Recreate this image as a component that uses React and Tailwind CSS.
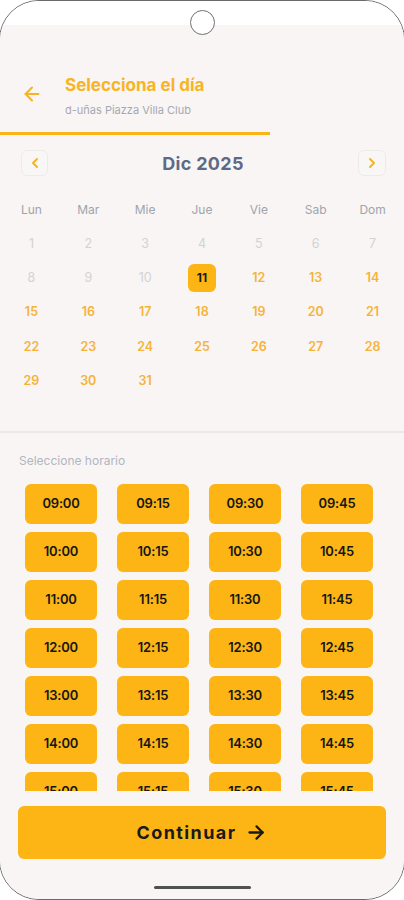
import React from "react";

const times = [];
for (let h = 9; h <= 19; h++) {
  for (const m of ["00", "15", "30", "45"]) {
    times.push(`${String(h).padStart(2, "0")}:${m}`);
  }
}

const weekdays = ["Lun", "Mar", "Mie", "Jue", "Vie", "Sab", "Dom"];
const days = Array.from({ length: 31 }, (_, i) => i + 1);

export default function App() {
  return (
    <div className="relative w-[404px] h-[900px] bg-white overflow-hidden" style={{ fontFamily: "Inter, 'Noto Sans', sans-serif" }}>
      <div className="-mx-[1px] h-full rounded-[40px] border-[1.5px] border-[#6a6a6a] overflow-hidden flex flex-col">
        <div className="h-[24px] bg-white shrink-0" />
        <div className="flex-1 min-h-0 bg-[#f8f5f4] flex flex-col">
          {/* Header */}
          <div className="flex items-center pl-[21px] pt-[48px]">
            <svg width="22" height="22" viewBox="0 0 24 24" fill="none" stroke="#f7b322" strokeWidth="2.2" strokeLinecap="round" strokeLinejoin="round" className="-mt-[3px]">
              <path d="M19 12H5" />
              <path d="M12 19l-7-7 7-7" />
            </svg>
            <div className="ml-[22px] flex flex-col">
              <div className="text-[17px] leading-[24px] font-bold text-[#f8b423]">Selecciona el día</div>
              <div className="mt-[5px] text-[11px] leading-[16px] text-[#a6a9b3]">d-uñas Piazza Villa Club</div>
            </div>
          </div>
          <div className="mt-[14px] h-[3px] w-[270px] bg-[#fbb418]" />

          {/* Month nav */}
          <div className="mt-[14px] flex items-center justify-between pl-[21px] pr-[18px]">
            <button className="w-[27px] h-[26px] rounded-[6px] border border-[#eeeae8] bg-[#f9f7f6] flex items-center justify-center">
              <svg width="10" height="12" viewBox="0 0 10 12" fill="none" stroke="#f7b322" strokeWidth="2" strokeLinecap="round" strokeLinejoin="round">
                <path d="M7 2L3 6l4 4" />
              </svg>
            </button>
            <div className="text-[18px] font-bold text-[#5e6a85] tracking-[0.3px] mt-[1px]">Dic 2025</div>
            <button className="w-[28px] h-[26px] rounded-[6px] border border-[#eeeae8] bg-[#f9f7f6] flex items-center justify-center">
              <svg width="10" height="12" viewBox="0 0 10 12" fill="none" stroke="#f7b322" strokeWidth="2" strokeLinecap="round" strokeLinejoin="round">
                <path d="M3 2l4 4-4 4" />
              </svg>
            </button>
          </div>

          {/* Calendar */}
          <div className="px-[3px] mt-[25px] grid grid-cols-7">
            {weekdays.map((w) => (
              <div key={w} className="text-center text-[12px] leading-[16px] text-[#a0a4ad]">{w}</div>
            ))}
          </div>
          <div className="px-[3px] mt-[12px] grid grid-cols-7 gap-y-[6.4px] pb-[35px]">
            {days.map((d) => {
              const disabled = d < 11;
              const selected = d === 11;
              return (
                <div key={d} className="h-[28px] flex items-center justify-center">
                  {selected ? (
                    <div className="w-[28px] h-[28px] rounded-[6px] bg-[#fdb515] flex items-center justify-center text-[12px] font-bold text-[#1a1a1a]">{d}</div>
                  ) : (
                    <span className={disabled ? "text-[12.5px] text-[#d4d2d1]" : "text-[12.5px] font-semibold text-[#f6b338]"}>{d}</span>
                  )}
                </div>
              );
            })}
          </div>
          <div className="h-[2px] bg-[#ece8e7]" />

          {/* Times */}
          <div className="pt-[20px] pl-[19px] text-[12px] leading-[16px] text-[#b2b6c1]">Seleccione horario</div>
          <div className="flex-1 min-h-0 overflow-hidden mt-[15px]">
            <div className="pl-[25px] grid grid-cols-[repeat(4,72px)] gap-x-[20px] gap-y-[8px]">
              {times.map((t) => (
                <div key={t} className="h-[40px] rounded-[6px] bg-[#fdb515] flex items-center justify-center text-[13px] font-semibold text-[#151515] tracking-[-0.2px]">
                  {t}
                </div>
              ))}
            </div>
          </div>

          {/* Bottom */}
          <div className="shrink-0 h-[108px] pt-[15px] px-[18px] flex flex-col">
            <button className="h-[53px] w-full rounded-[6px] bg-[#fdb515] flex items-center justify-center gap-[10px]">
              <span className="text-[18px] font-bold text-[#1a1a1a] tracking-[1.4px]">Continuar</span>
              <svg width="21" height="21" viewBox="0 0 24 24" fill="none" stroke="#1a1a1a" strokeWidth="2.6" strokeLinecap="round" strokeLinejoin="round">
                <path d="M4 12h15" />
                <path d="M12 5l7 7-7 7" />
              </svg>
            </button>
            <div className="mt-[27px] flex justify-center">
              <div className="w-[97px] h-[3px] rounded-full bg-[#505050]" />
            </div>
          </div>
        </div>
      </div>
      {/* camera hole */}
      <div className="absolute left-[190px] top-[10px] w-[25px] h-[25px] rounded-full border-[1.5px] border-[#707070] bg-white" />
    </div>
  );
}
